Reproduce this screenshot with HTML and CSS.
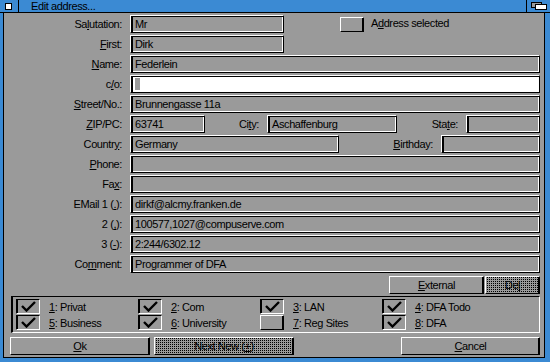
FILE: index.html
```html
<!DOCTYPE html>
<html lang="en">
<head>
    <meta charset="UTF-8">
    <title>Edit address...</title>
    <link rel="stylesheet" href="styles.css">
</head>
<body>
    <div class="screen">
        <div class="titlebar">
            <div class="close-gadget"><span></span></div>
            <div class="title">Edit address...</div>
            <div class="depth-gadget">
                <svg width="16" height="8" viewBox="0 0 16 8">
                    <rect x="0.5" y="0.5" width="10" height="5" fill="#9a9a9a" stroke="#000"/>
                    <rect x="4.5" y="2.5" width="11" height="5" fill="#fff" stroke="#000"/>
                </svg>
            </div>
        </div>

        <div class="window">
            <div class="form">
                <label>Sa<u>l</u>utation:</label>
                <div class="cell">
                    <div class="field w-short">Mr</div>
                    <div class="check raised sel-box"></div>
                    <span class="sel-text">A<u>d</u>dress selected</span>
                </div>

                <label><u>F</u>irst:</label>
                <div class="cell"><div class="field w-short">Dirk</div></div>

                <label><u>N</u>ame:</label>
                <div class="field">Federlein</div>

                <label>c<u>/</u>o:</label>
                <div class="field active"><span class="cursor"></span></div>

                <label><u>S</u>treet/No.:</label>
                <div class="field">Brunnengasse 11a</div>

                <label><u>Z</u>IP/PC:</label>
                <div class="cell">
                    <div class="field w-zip">63741</div>
                    <label class="inline w-city-label">Ci<u>t</u>y:</label>
                    <div class="field w-city">Aschaffenburg</div>
                    <label class="inline w-state-label">Sta<u>t</u>e:</label>
                    <div class="field grow"></div>
                </div>

                <label>Countr<u>y</u>:</label>
                <div class="cell">
                    <div class="field w-country">Germany</div>
                    <label class="inline w-birth-label"><u>B</u>irthday:</label>
                    <div class="field grow"></div>
                </div>

                <label><u>P</u>hone:</label>
                <div class="field"></div>

                <label>Fa<u>x</u>:</label>
                <div class="field"></div>

                <label>EMail 1 (<u>.</u>):</label>
                <div class="field">dirkf@alcmy.franken.de</div>

                <label>2 (<u>,</u>):</label>
                <div class="field">100577,1027@compuserve.com</div>

                <label>3 (<u>-</u>):</label>
                <div class="field">2:244/6302.12</div>

                <label>Co<u>m</u>ment:</label>
                <div class="field">Programmer of DFA</div>
            </div>

            <div class="actions">
                <div class="button w-external"><u>E</u>xternal</div>
                <div class="button dither w-del">De<u>l</u></div>
            </div>

            <div class="groups">
                <div class="group"><div class="check on"></div><span><u>1</u>: Privat</span></div>
                <div class="group"><div class="check on"></div><span><u>2</u>: Com</span></div>
                <div class="group"><div class="check on"></div><span><u>3</u>: LAN</span></div>
                <div class="group"><div class="check on"></div><span><u>4</u>: DFA Todo</span></div>
                <div class="group"><div class="check on"></div><span><u>5</u>: Business</span></div>
                <div class="group"><div class="check on"></div><span><u>6</u>: University</span></div>
                <div class="group"><div class="check raised"></div><span><u>7</u>: Reg Sites</span></div>
                <div class="group"><div class="check on"></div><span><u>8</u>: DFA</span></div>
            </div>

            <div class="buttons">
                <div class="button w-wide"><u>O</u>k</div>
                <div class="button dither w-wide">Next New (<u>+</u>)</div>
                <div class="button w-cancel push-right"><u>C</u>ancel</div>
            </div>
        </div>
    </div>
</body>
</html>
```

FILE: styles.css
```css
* {
    box-sizing: border-box;
}
body {
    margin: 0;
    background: #3b8ad3;
    font-family: "Liberation Sans", Arial, sans-serif;
    font-size: 11px;
    letter-spacing: -0.4px;
    color: #000;
}
u {
    text-decoration-thickness: 1px;
    text-underline-offset: 1px;
}

/* title bar */
.screen {
    width: 550px;
    height: 362px;
    display: flex;
    flex-direction: column;
}
.titlebar {
    height: 13px;
    display: flex;
    border-bottom: 1px solid #000;
}
.close-gadget {
    width: 19px;
    padding: 3px 0 0 5px;
    border-right: 1px solid #000;
}
.close-gadget span {
    display: block;
    width: 7px;
    height: 7px;
    background: #fff;
    border: 1px solid #000;
}
.title {
    padding-left: 12px;
    line-height: 12px;
}
.depth-gadget {
    margin-left: auto;
    width: 24px;
    padding: 2px 0 0 4px;
    border-left: 1px solid #000;
}
.depth-gadget svg {
    display: block;
}

/* window */
.window {
    flex: 1;
    margin: 0 5px 4px 3px;
    background: #9a9a9a;
    border-left: 1px solid #000;
    border-right: 1px solid #000;
    border-bottom: 1px solid #000;
    padding: 2px 4px 0 0;
}
.form {
    display: grid;
    grid-template-columns: 121px 1fr;
    grid-auto-rows: 18px;
    column-gap: 5px;
    row-gap: 2px;
}
label {
    text-align: right;
    padding-right: 3px;
    line-height: 18px;
    white-space: nowrap;
}
.cell {
    display: flex;
    align-items: center;
}
.field {
    height: 18px;
    line-height: 16px;
    padding-left: 4px;
    border: 1px solid;
    border-color: #fff #000 #000 #fff;
    box-shadow: inset 2px 1px 0 #000, inset -1px -1px 0 #fff;
    white-space: nowrap;
    overflow: hidden;
}
.field.active {
    background: #fff;
}
.cursor {
    display: inline-block;
    width: 5px;
    height: 12px;
    margin-top: 2px;
    background: #9a9a9a;
    vertical-align: top;
}
.w-short { width: 154px; }
.w-zip { width: 75px; }
.w-city { width: 130px; }
.w-country { width: 209px; }
.grow { flex: 1; }
.inline {
    padding-right: 8px;
}
.w-city-label { width: 62px; }
.w-state-label { width: 69px; }
.w-birth-label { width: 102px; }

.sel-box {
    width: 26px;
    height: 16px;
    margin-left: 56px;
}
.sel-text {
    margin-left: 7px;
    margin-top: -2px;
}

/* checkboxes */
.check {
    width: 24px;
    height: 15px;
    flex-shrink: 0;
    border: 1px solid;
}
.check.raised {
    border-color: #fff #000 #000 #fff;
    box-shadow: inset -1px 0 0 #000;
}
.check.on {
    border-color: #000 #fff #fff #000;
    box-shadow: inset 1px 0 0 #000;
    background: no-repeat 4px 1px / 15px 11px url("data:image/svg+xml;utf8,<svg xmlns='http://www.w3.org/2000/svg' viewBox='0 0 15 11'><path d='M1 5 L5.5 9.5 L14 1' fill='none' stroke='black' stroke-width='2.4'/></svg>");
}

/* buttons */
.actions {
    display: flex;
    justify-content: flex-end;
    gap: 1px;
    margin-top: 3px;
    height: 18px;
}
.button {
    height: 18px;
    line-height: 16px;
    text-align: center;
    border: 1px solid;
    border-color: #fff #000 #000 #fff;
    box-shadow: inset -1px 0 0 #000;
}
.dither {
    background: repeating-conic-gradient(#000 0 25%, #9a9a9a 0 100%) 0 0 / 2px 2px;
}
.w-external { width: 95px; }
.w-del { width: 55px; }
.w-wide { width: 140px; }
.w-cancel { width: 139px; }
.push-right { margin-left: auto; }

.groups {
    margin: 2px 0 0 7px;
    height: 37px;
    padding: 2px 0 0 3px;
    border: 1px solid;
    border-width: 1px 1px 1px 2px;
    border-color: #000 #fff #fff #000;
    display: grid;
    grid-template-columns: repeat(4, 122px);
    grid-auto-rows: 15px;
    row-gap: 1px;
}
.group {
    display: flex;
    align-items: center;
}
.group span {
    margin-left: 9px;
}

.buttons {
    display: flex;
    gap: 4px;
    margin: 4px 0 0 6px;
}
```
